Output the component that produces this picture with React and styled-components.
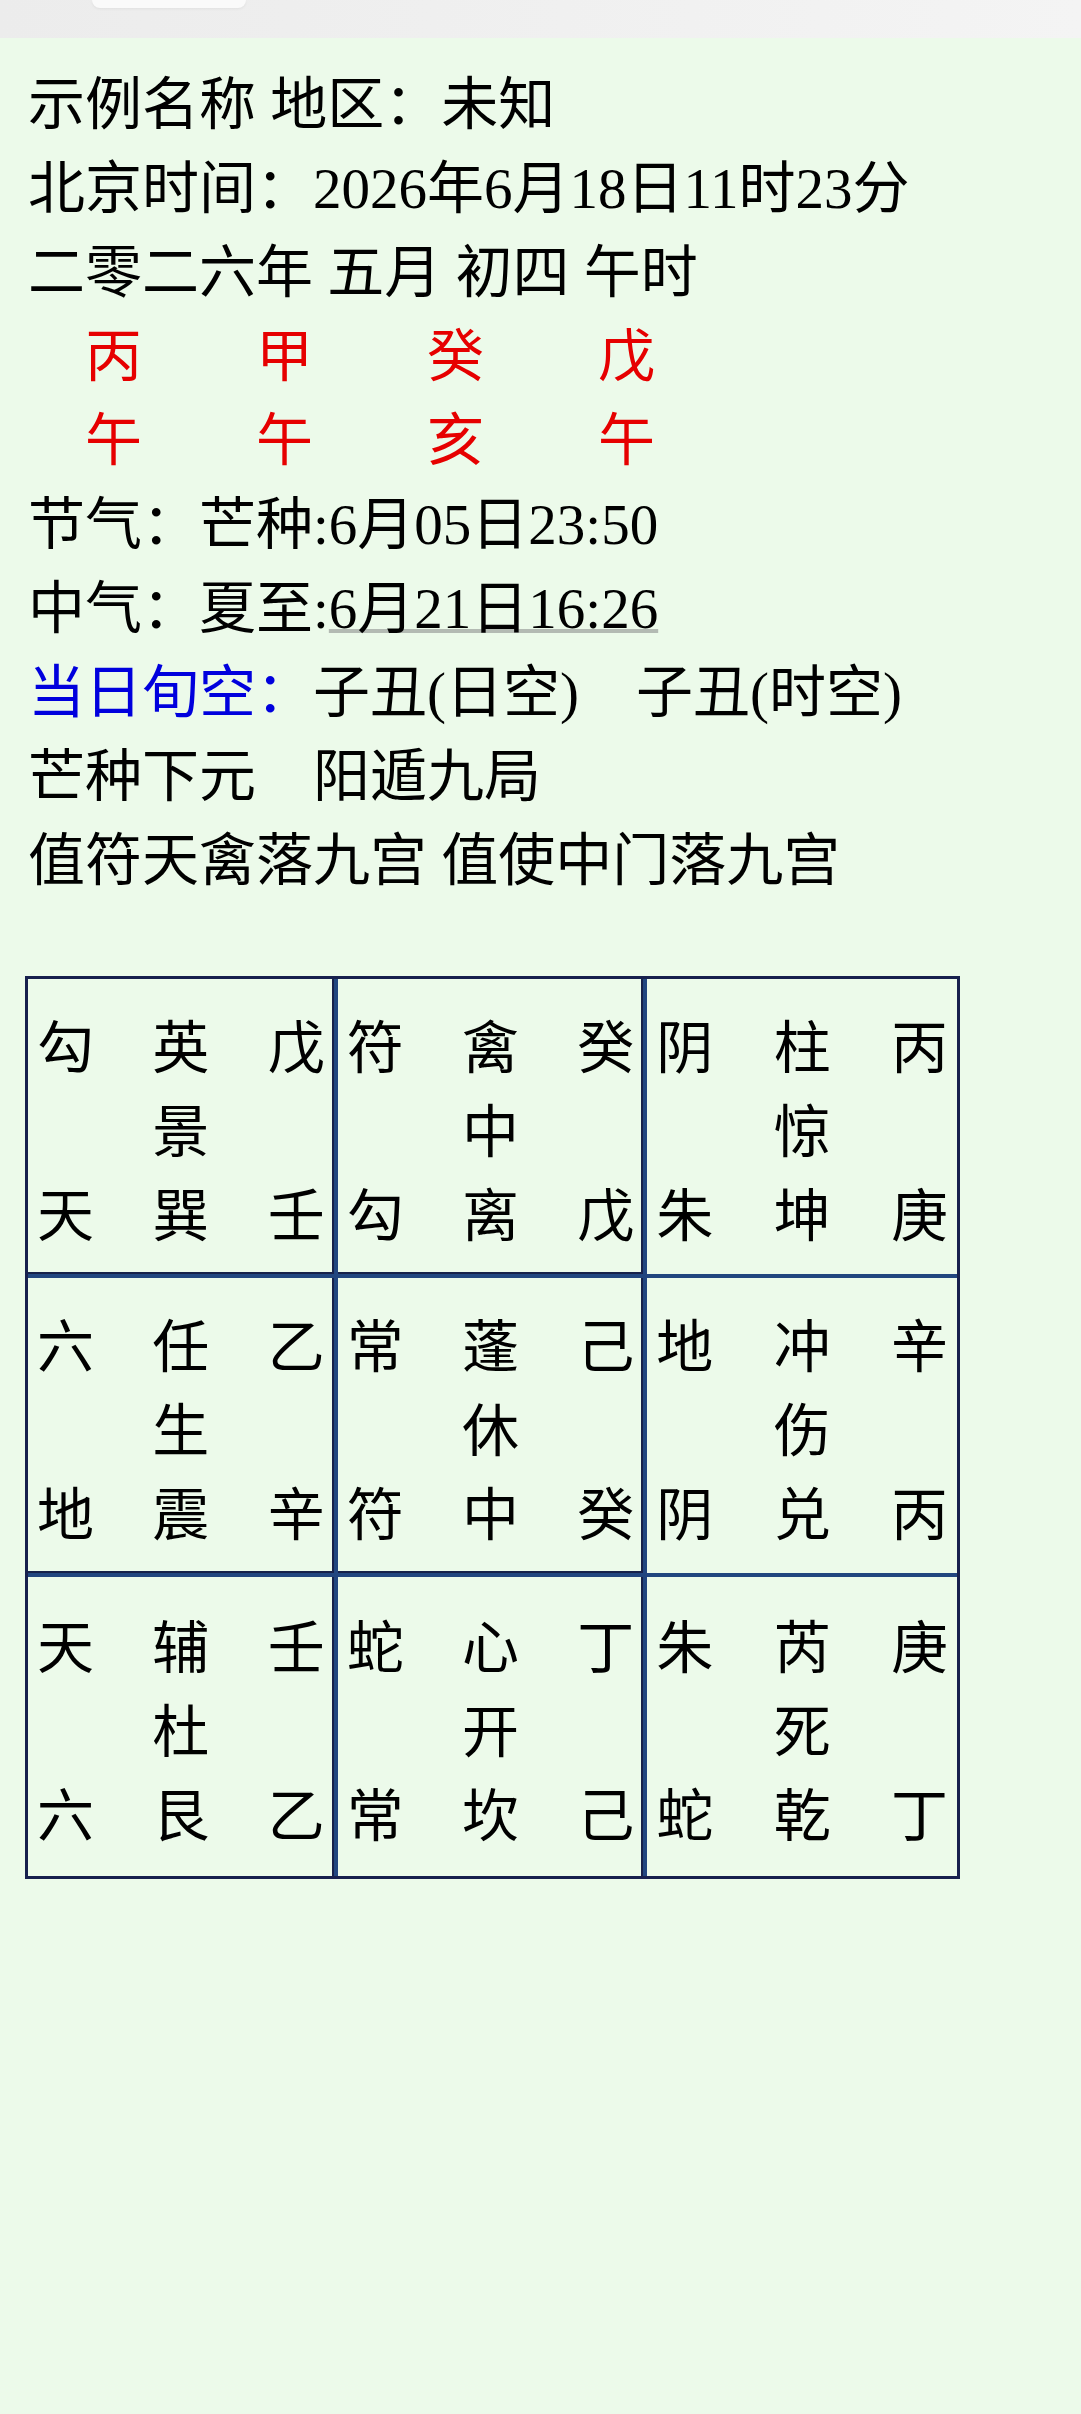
import styled, { createGlobalStyle } from 'styled-components';

const GlobalStyle = createGlobalStyle`
  html, body {
    margin: 0;
    padding: 0;
    background: #ecfaea;
  }
  body {
    font-family: 'Liberation Serif', 'Noto Sans CJK SC', serif;
    color: #000;
  }
`;

const SP = '\u3000';

// 九宫 data: each palace has three lines of [left, centre, right]
const palaces = [
  [['勾', '英', '戊'], ['', '景', ''], ['天', '巽', '壬']],
  [['符', '禽', '癸'], ['', '中', ''], ['勾', '离', '戊']],
  [['阴', '柱', '丙'], ['', '惊', ''], ['朱', '坤', '庚']],
  [['六', '任', '乙'], ['', '生', ''], ['地', '震', '辛']],
  [['常', '蓬', '己'], ['', '休', ''], ['符', '中', '癸']],
  [['地', '冲', '辛'], ['', '伤', ''], ['阴', '兑', '丙']],
  [['天', '辅', '壬'], ['', '杜', ''], ['六', '艮', '乙']],
  [['蛇', '心', '丁'], ['', '开', ''], ['常', '坎', '己']],
  [['朱', '芮', '庚'], ['', '死', ''], ['蛇', '乾', '丁']],
];

const App = () => {
  return (
    <>
      <GlobalStyle />
      <StyledTopBar>
        <StyledTab />
      </StyledTopBar>

      <StyledInfo>
        <Line>示例名称 地区：未知</Line>
        <Line>北京时间：2026年6月18日11时23分</Line>
        <Line>二零二六年 五月 初四 午时</Line>
        <Line $red>{`${SP}丙${SP}${SP}甲${SP}${SP}癸${SP}${SP}戊`}</Line>
        <Line $red>{`${SP}午${SP}${SP}午${SP}${SP}亥${SP}${SP}午`}</Line>
        <Line>节气：芒种:6月05日23:50</Line>
        <Line>
          中气：夏至:<DateLink>6月21日16:26</DateLink>
        </Line>
        <Line>
          <Label>当日旬空：</Label>
          {`子丑(日空)${SP}子丑(时空)`}
        </Line>
        <Line>{`芒种下元${SP}阳遁九局`}</Line>
        <Line>值符天禽落九宫 值使中门落九宫</Line>
      </StyledInfo>

      <StyledGrid>
        {palaces.map((lines, i) => (
          <Palace key={i} $col={i % 3} $row={Math.floor(i / 3)}>
            {lines.map((chars, j) => (
              <PalaceLine key={j}>
                {chars.map((c, k) => (
                  <Glyph key={k}>{c}</Glyph>
                ))}
              </PalaceLine>
            ))}
          </Palace>
        ))}
      </StyledGrid>
    </>
  );
};

export default App;

const StyledTopBar = styled.div`
  height: 38px;
  background: linear-gradient(90deg, #ececec 0%, #efefef 40%, #f4f4f4 100%);
  display: flex;
  align-items: flex-start;
`;

const StyledTab = styled.div`
  width: 154px;
  height: 8px;
  margin-left: 92px;
  background: #fafafa;
  border-radius: 0 0 26px 26px;
  box-shadow: 0 1px 3px rgba(0, 0, 0, 0.06);
`;

const StyledInfo = styled.div`
  padding: 25px 0 0 28px;
  font-size: 57px;
  line-height: 84px;
`;

const Line = styled.div`
  white-space: pre;
  color: ${(p) => (p.$red ? '#e60000' : '#000')};
`;

const Label = styled.span`
  color: #0000dd;
`;

const DateLink = styled.span`
  text-decoration: underline;
  text-decoration-color: #b3bab3;
  text-decoration-thickness: 4px;
  text-underline-offset: 1px;
`;

const StyledGrid = styled.div`
  margin: 73px 0 0 25px;
  width: 935px;
  display: grid;
  grid-template-columns: repeat(3, 1fr);
  grid-template-rows: repeat(3, 299px);
  border: 3px solid #17204d;
  box-sizing: border-box;
  font-family: 'Noto Sans CJK SC', sans-serif;
  font-size: 57px;
  line-height: 84px;
`;

const Palace = styled.div`
  display: flex;
  flex-direction: column;
  justify-content: center;
  padding: 0 9px;
  border-right: ${(p) => (p.$col < 2 ? '4px solid #21467f' : 'none')};
  border-bottom: ${(p) => (p.$row < 2 ? '4px solid #21467f' : 'none')};
  box-shadow: ${(p) => (p.$col < 2 ? 'inset -2px 0 0 #16214a' : 'none')}
    ${(p) => (p.$row < 2 ? ', inset 0 -2px 0 #16214a' : '')};
`;

const PalaceLine = styled.div`
  display: flex;
  justify-content: space-between;
`;

const Glyph = styled.span`
  width: 1em;
  text-align: center;
`;
